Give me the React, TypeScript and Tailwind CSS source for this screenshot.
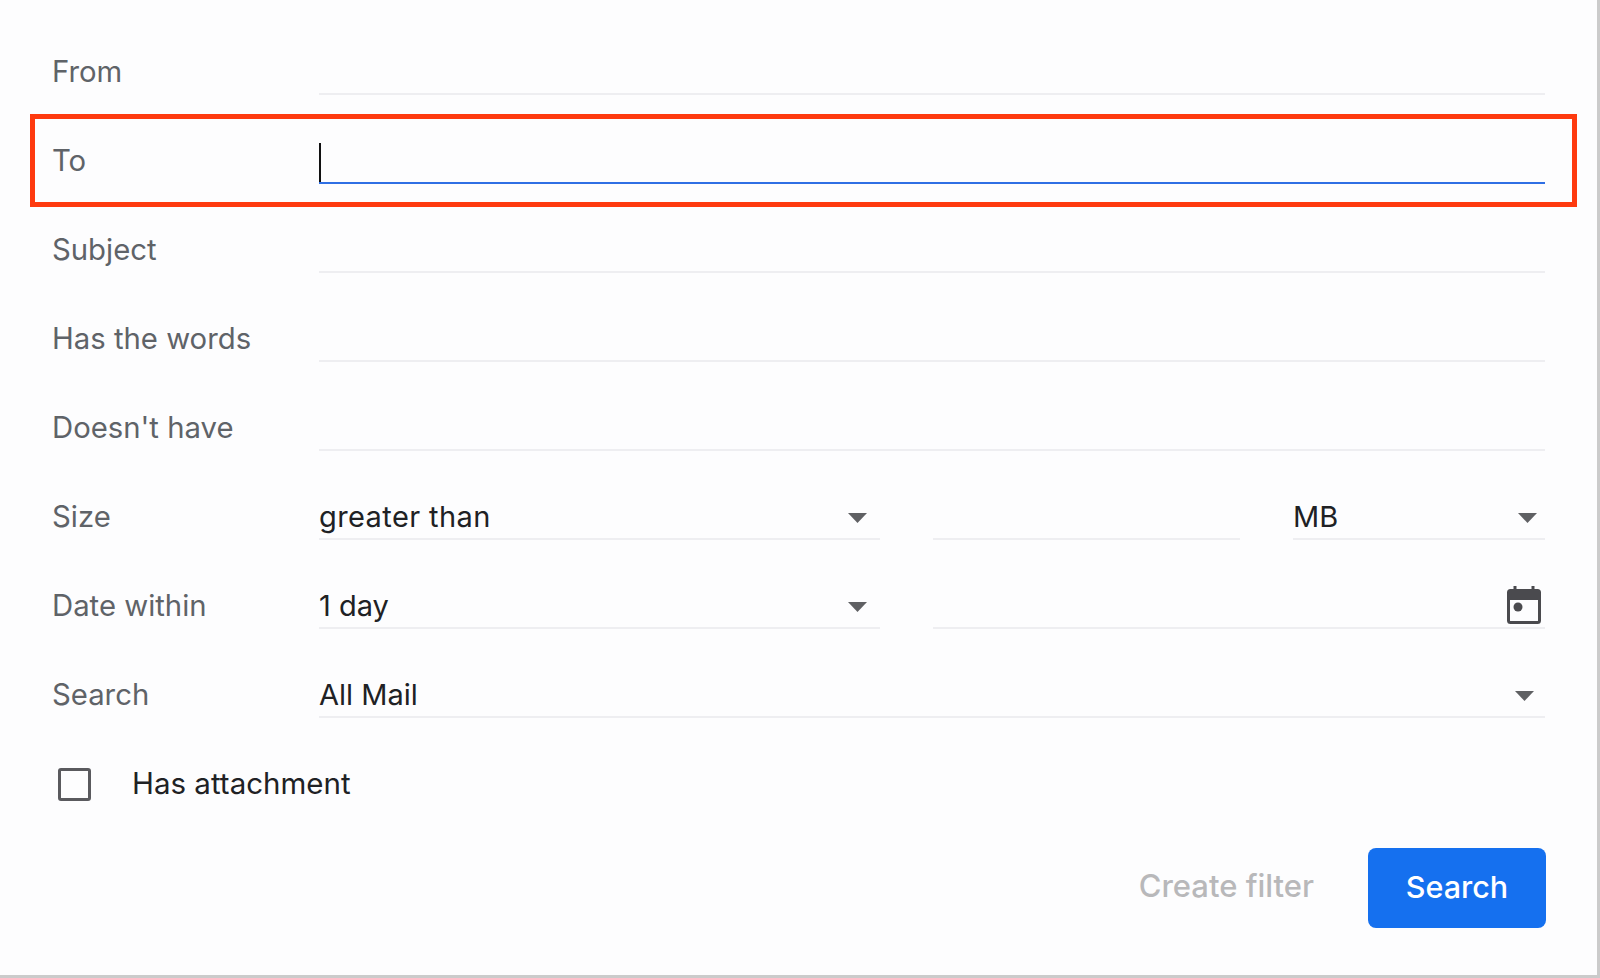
import type { ReactNode } from 'react';

function Caret({ pad }: { pad: string }) {
  return (
    <svg width="19" height="10" viewBox="0 0 19 10" className={`mt-[6px] shrink-0 ${pad}`}>
      <path d="M0 0h19l-9.5 10z" fill="#5f6063" />
    </svg>
  );
}

function Row({ label, children }: { label: string; children?: ReactNode }) {
  return (
    <div className="flex h-[89px] items-end pl-[52px] pr-[52px]">
      <div className="flex h-[48px] w-[267px] shrink-0 items-center pt-[2px] text-[29.3px] text-[#5f6368]">{label}</div>
      <div className="flex h-[48px] flex-1 gap-[53px]">{children ?? <Field />}</div>
    </div>
  );
}

function Field({ text, caret, className = 'flex-1' }: { text?: string; caret?: string; className?: string }) {
  return (
    <div className={`flex items-center justify-between border-b-2 border-[#eeeef1] text-[29px] text-[#202124] ${className}`}>
      <span className="mt-[4px]">{text}</span>
      {caret && <Caret pad={caret} />}
    </div>
  );
}

export default function App() {
  return (
    <div className="relative flex h-[978px] w-[1600px] flex-col border-r-[3px] border-b-[3px] border-[#cbcbcb] bg-[#fdfdfe] pt-[6px] font-['Inter',sans-serif]">
      <Row label="From" />
      <Row label="To">
        <div className="flex flex-1 items-end border-b-2 border-[#2f6fe4]">
          <div className="h-[39px] w-[2px] bg-[#111111]" />
        </div>
      </Row>
      <Row label="Subject" />
      <Row label="Has the words" />
      <Row label="Doesn't have" />
      <Row label="Size">
        <Field text="greater than" caret="mr-[13px]" className="w-[561px] tracking-[0.4px]" />
        <Field className="w-[307px]" />
        <Field text="MB" caret="mr-[8px]" className="w-[252px]" />
      </Row>
      <Row label="Date within">
        <Field text="1 day" caret="mr-[13px]" className="w-[561px]" />
        <div className="flex flex-1 items-end justify-end border-b-2 border-[#eeeef1] pb-[3px] pr-[4px]">
          <svg width="34" height="38" viewBox="0 0 34 38" fill="none">
            <path d="M8 0v6M26 0v6" stroke="#4a4a4e" strokeWidth="3" />
            <rect x="1.5" y="4.5" width="31" height="32" rx="2" stroke="#4a4a4e" strokeWidth="3" />
            <path d="M2 5h30v9H2z" fill="#4a4a4e" />
            <circle cx="11" cy="21" r="4.5" fill="#4a4a4e" />
          </svg>
        </div>
      </Row>
      <Row label="Search">
        <Field text="All Mail" caret="mr-[11px]" />
      </Row>
      <div className="flex h-[89px] items-end pl-[58px]">
        <div className="flex h-[48px] items-center">
          <div className="mt-[2px] h-[33px] w-[33px] rounded-[3px] border-[3.5px] border-[#5a5a5e]" />
          <span className="ml-[41px] text-[29.5px] text-[#202124]">Has attachment</span>
        </div>
      </div>
      <div className="mt-[41px] flex items-center justify-end gap-[54px] pr-[51px]">
        <span className="mb-[4px] text-[31px] font-medium text-[#b8b8ba]">Create filter</span>
        <button className="h-[80px] w-[178px] rounded-[8px] bg-[#1570ef] pb-[3px] text-[30.5px] font-medium text-white">Search</button>
      </div>
      <div className="absolute left-[30px] top-[114px] h-[93px] w-[1547px] border-[5px] border-[#fe3a0f]" />
    </div>
  );
}
